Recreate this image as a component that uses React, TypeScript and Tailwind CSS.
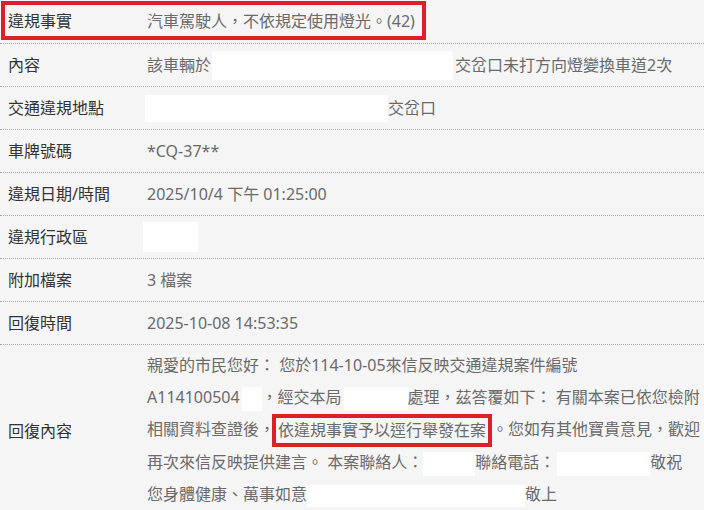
export default function App() {
  const rowCls = "flex h-[43px] border-b border-dotted border-[#a8a8a8] items-center";
  const labelCls = "w-[147px] shrink-0 pl-[8px] text-[#333]";
  const valueCls = "flex-1 text-[#6a6a6a] whitespace-nowrap flex items-center";
  const redact = "inline-block bg-white align-middle";

  return (
    <div
      lang="zh-TW"
      className="w-[704px] h-[510px] overflow-hidden bg-[#f5f5f5] text-[16px] font-['Noto_Sans','Noto_Sans_CJK_TC',sans-serif]"
    >
      {/* 違規事實 - highlighted row */}
      <div className="h-[43px] border-b border-dotted border-[#a8a8a8]">
        <div className="mt-[1px] ml-[1px] h-[39px] w-[425px] border-4 border-[#dc202a] flex items-center">
          <span className="w-[142px] shrink-0 pl-[3px] text-[#333]">違規事實</span>
          <span className="text-[#6a6a6a] whitespace-nowrap">汽車駕駛人，不依規定使用燈光。(42)</span>
        </div>
      </div>

      <div className={rowCls}>
        <div className={labelCls}>內容</div>
        <div className={valueCls}>
          該車輛於
          <span className={`${redact} w-[241px] h-[29px] ml-[1px] mr-[2px]`} />
          交岔口未打方向燈變換車道2次
        </div>
      </div>

      <div className={rowCls}>
        <div className={labelCls}>交通違規地點</div>
        <div className={valueCls}>
          <span className={`${redact} w-[243px] h-[27px] -ml-[2px]`} />
          交岔口
        </div>
      </div>

      <div className={rowCls}>
        <div className={labelCls}>車牌號碼</div>
        <div className={valueCls}>*CQ-37**</div>
      </div>

      <div className={rowCls}>
        <div className={labelCls}>違規日期/時間</div>
        <div className={valueCls}>2025/10/4 下午 01:25:00</div>
      </div>

      <div className={rowCls}>
        <div className={labelCls}>違規行政區</div>
        <div className={valueCls}>
          <span className={`${redact} w-[55px] h-[30px] -ml-[4px]`} />
        </div>
      </div>

      <div className={rowCls}>
        <div className={labelCls}>附加檔案</div>
        <div className={valueCls}>3 檔案</div>
      </div>

      <div className={rowCls}>
        <div className={labelCls}>回復時間</div>
        <div className={valueCls}>2025-10-08 14:53:35</div>
      </div>

      {/* 回復內容 */}
      <div className="flex border-b border-dotted border-[#a8a8a8]">
        <div className={`${labelCls} self-center`}>回復內容</div>
        <div className="flex-1 pt-[4px] pb-[6px] text-[#6a6a6a] leading-[32px] whitespace-nowrap">
          <div>親愛的市民您好： 您於114-10-05來信反映交通違規案件編號</div>
          <div>
            A114100504
            <span className={`${redact} w-[20px] h-[24px] ml-[2px]`} />
            ，經交本局
            <span className={`${redact} w-[64px] h-[24px] ml-[2px]`} />
            處理，茲答覆如下： 有關本案已依您檢附
          </div>
          <div>
            相關資料查證後，
            <span className="inline-block align-middle h-[33px] -my-[1px] -ml-[3px] leading-[25px] px-[2px] border-4 border-[#dc202a]">
              依違規事實予以逕行舉發在案
            </span>
            。您如有其他寶貴意見，歡迎
          </div>
          <div>
            再次來信反映提供建言。 本案聯絡人：
            <span className={`${redact} w-[52px] h-[24px]`} />
            聯絡電話：
            <span className={`${redact} w-[93px] h-[24px] ml-[2px]`} />
            敬祝
          </div>
          <div>
            您身體健康、萬事如意
            <span className={`${redact} w-[218px] h-[22px]`} />
            敬上
          </div>
        </div>
      </div>
    </div>
  );
}
